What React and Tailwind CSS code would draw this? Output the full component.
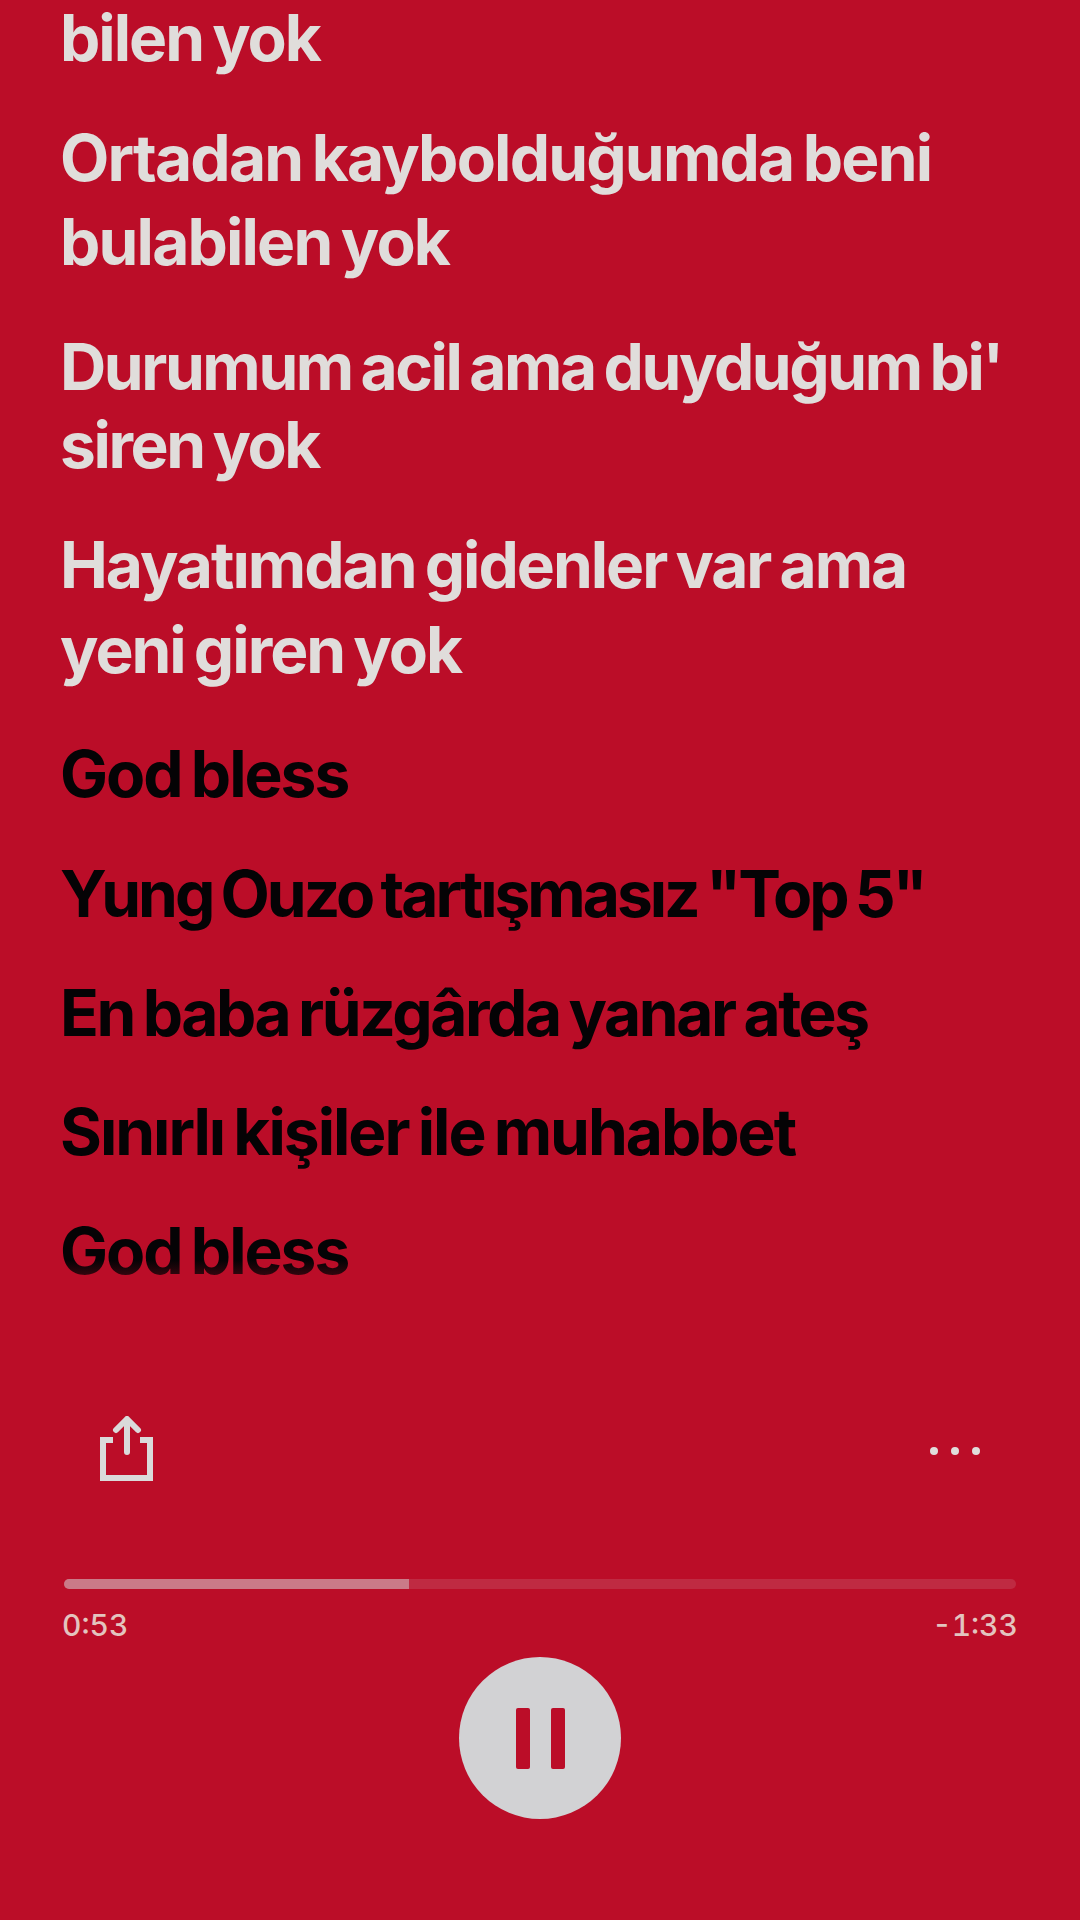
const lines = [
  { t: "bilen yok", c: "text-[#e0dddb] leading-[75px] tracking-[-2px]" },
  { t: "Ortadan kaybolduğumda beni bulabilen yok", c: "text-[#e0dddb] leading-[84px] mt-[41px] tracking-[-1.8px]" },
  { t: "Durumum acil ama duyduğum bi' siren yok", c: "text-[#e0dddb] leading-[78px] mt-[44px] tracking-[-2.4px]" },
  { t: "Hayatımdan gidenler var ama yeni giren yok", c: "text-[#e0dddb] leading-[85px] mt-[38px] tracking-[-2px]" },
  { t: "God bless", c: "text-[#050305] leading-[82px] mt-[41px] tracking-[-2px]" },
  { t: 'Yung Ouzo tartışmasız "Top 5"', c: "text-[#050305] leading-[82px] mt-[38px] tracking-[-3px]" },
  { t: "En baba rüzgârda yanar ateş", c: "text-[#050305] leading-[82px] mt-[37px] tracking-[-2.4px]" },
  { t: "Sınırlı kişiler ile muhabbet", c: "text-[#050305] leading-[82px] mt-[37px] tracking-[-2px]" },
];

export default function App() {
  return (
    <div className="w-[1080px] h-[1920px] overflow-hidden bg-[#bb0d28] font-['Inter','Liberation_Sans',sans-serif] flex flex-col">
      <div className="pl-[60px] pr-[58px] flex flex-col text-[64px] font-bold [word-spacing:-4px]">
        {lines.map((l, i) => (
          <p key={i} className={l.c}>{l.t}</p>
        ))}
        <p className="relative text-[#050305] leading-[82px] mt-[37px] tracking-[-2px]">
          God bless
          <span className="absolute left-0 top-[50px] w-[300px] h-[18px] bg-linear-to-b from-transparent to-[#bb0d28]/30" />
        </p>
      </div>
      <div className="mt-[122px] px-[100px] flex items-center justify-between h-[70px]">
        <svg width="54" height="66" viewBox="0 0 54 66" fill="none" stroke="#dadada" strokeWidth="6">
          <path d="M27 36V4" strokeLinecap="round" />
          <path d="M16 14 27 3l11 11" strokeLinecap="round" strokeLinejoin="round" />
          <path d="M13 24H3v38h47V24H40" />
        </svg>
        <div className="flex gap-[13px] mt-[3px]">
          <span className="w-[8px] h-[8px] rounded-full bg-[#e0dddb]" />
          <span className="w-[8px] h-[8px] rounded-full bg-[#e0dddb]" />
          <span className="w-[8px] h-[8px] rounded-full bg-[#e0dddb]" />
        </div>
      </div>
      <div className="mt-[95px] mx-[64px] h-[10px] rounded-full bg-[#bf2a42] overflow-hidden">
        <div className="h-full w-[345px] bg-[#ca7a88]" />
      </div>
      <div className="mt-[19px] mx-[62px] flex justify-between text-[30px] leading-[34px] font-medium tabular-nums text-[#e3c4bf]">
        <span>0:53</span>
        <span>-1:33</span>
      </div>
      <div className="mt-[15px] flex justify-center">
        <div className="w-[162px] h-[162px] rounded-full bg-[#d2d2d4] flex items-center justify-center gap-[21px]">
          <span className="w-[14px] h-[61px] rounded-[2px] bg-[#bb0d28]" />
          <span className="w-[14px] h-[61px] rounded-[2px] bg-[#bb0d28]" />
        </div>
      </div>
    </div>
  );
}
